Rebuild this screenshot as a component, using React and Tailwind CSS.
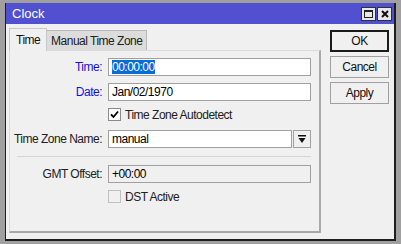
import React from "react";

const font = { fontFamily: '"Liberation Sans", Arial, sans-serif' };

function Input({ children, className = "", disabled = false }) {
  return (
    <div
      className={`h-[18px] border border-[#a0a0a0] flex items-center px-[3px] text-[12px] whitespace-nowrap ${
        disabled ? "bg-[#f0f0f0]" : "bg-white"
      } ${className}`}
    >
      {children}
    </div>
  );
}

function Row({ label, blue, children }) {
  return (
    <div className="flex items-center">
      <div
        className={`w-[98px] shrink-0 text-right pr-[6px] text-[12px] whitespace-nowrap ${
          blue ? "text-[#1010e0]" : "text-[#202020]"
        }`}
      >
        {label}
      </div>
      <div className="flex-1 flex">{children}</div>
    </div>
  );
}

function Check({ checked, disabled, label }) {
  return (
    <div className="flex items-center ml-[98px] h-[13px]">
      <div
        className={`w-[13px] h-[13px] border flex items-center justify-center ${
          disabled ? "border-[#c0c0c0] bg-[#f0f0f0]" : "border-[#8a8a8a] bg-white"
        }`}
      >
        {checked && (
          <svg width="9" height="9" viewBox="0 0 9 9">
            <path d="M1 4.5 L3.5 7 L8 1.5" stroke="#000" strokeWidth="1.8" fill="none" />
          </svg>
        )}
      </div>
      <span className="ml-[4px] text-[12px] text-[#202020] whitespace-nowrap">{label}</span>
    </div>
  );
}

function Btn({ children, primary }) {
  return (
    <div
      className={`w-[59px] h-[22px] flex items-center justify-center text-[12px] text-[#101010] bg-[#f0f0f0] ${
        primary ? "border-[2px] border-[#1a1a1a]" : "border border-[#a0a0a0]"
      }`}
    >
      {children}
    </div>
  );
}

export default function App() {
  return (
    <div className="w-[401px] h-[244px] bg-[#a0a0a0] pt-[3px] pl-[5px] tracking-[-0.5px]" style={font}>
      <div className="w-[391px] h-[238px] bg-[#f0f0f0] border-r-[2px] border-b-[2px] border-l border-[#1e1e1e] flex flex-col">
        <div className="h-[21px] bg-[#5050d0] flex items-center justify-between pl-[6px] pr-[2px]">
          <span className="text-white text-[13px] tracking-normal">Clock</span>
          <div className="flex gap-[1px]">
            <div className="w-[15px] h-[14px] bg-[#e8e8e8] border border-[#303030] flex items-center justify-center">
              <div className="w-[9px] h-[8px] border border-[#202020] border-t-[2px]" />
            </div>
            <div className="w-[15px] h-[14px] bg-[#e8e8e8] border border-[#303030] flex items-center justify-center">
              <svg width="8" height="8" viewBox="0 0 8 8">
                <path d="M1 1 L7 7 M7 1 L1 7" stroke="#101010" strokeWidth="2" />
              </svg>
            </div>
          </div>
        </div>
        <div className="flex flex-1 pl-[3px] pt-[3px] pb-[6px]">
          <div className="w-[312px] flex flex-col">
            <div className="flex items-end h-[23px]">
              <div className="h-[23px] px-[6px] flex items-center bg-[#f0f0f0] border-t border-l border-r border-[#c8c8c8] text-[12px] text-[#101010] relative z-10 mb-[-1px]">
                Time
              </div>
              <div className="h-[20px] w-[100px] flex items-center justify-center bg-[#dcdcdc] border-t border-r border-[#b8b8b8] text-[12px] text-[#202020] whitespace-nowrap">
                Manual Time Zone
              </div>
            </div>
            <div className="flex-1 border-r-[2px] border-b-[2px] border-l border-t border-[#a8a8a8] border-l-[#dcdcdc] border-t-[#dcdcdc] flex flex-col pt-[7px] pr-[8px]">
              <Row label="Time:" blue>
                <Input className="flex-1">
                  <span className="bg-[#0a6cd8] text-white leading-[14px]">00:00:00</span>
                </Input>
              </Row>
              <div className="h-[7px]" />
              <Row label="Date:" blue>
                <Input className="flex-1">Jan/02/1970</Input>
              </Row>
              <div className="h-[7px]" />
              <Check checked label="Time Zone Autodetect" />
              <div className="h-[9px]" />
              <Row label="Time Zone Name:">
                <Input className="flex-1">manual</Input>
                <div className="w-[18px] h-[18px] ml-[1px] border border-[#a0a0a0] bg-[#f0f0f0] flex items-center justify-center">
                  <svg width="8" height="9" viewBox="0 0 8 9">
                    <rect x="0" y="0" width="8" height="1.5" fill="#101010" />
                    <path d="M0.5 3 L7.5 3 L4 8 Z" fill="#101010" />
                  </svg>
                </div>
              </Row>
              <div className="h-[8px]" />
              <div className="ml-[7px] h-[1px] bg-[#d4d4d4]" />
              <div className="h-[8px]" />
              <Row label="GMT Offset:">
                <Input className="flex-1" disabled>+00:00</Input>
              </Row>
              <div className="h-[7px]" />
              <Check disabled label="DST Active" />
            </div>
          </div>
          <div className="flex flex-col gap-[4px] ml-[9px] pt-[3px]">
            <Btn primary>OK</Btn>
            <Btn>Cancel</Btn>
            <Btn>Apply</Btn>
          </div>
        </div>
      </div>
    </div>
  );
}
